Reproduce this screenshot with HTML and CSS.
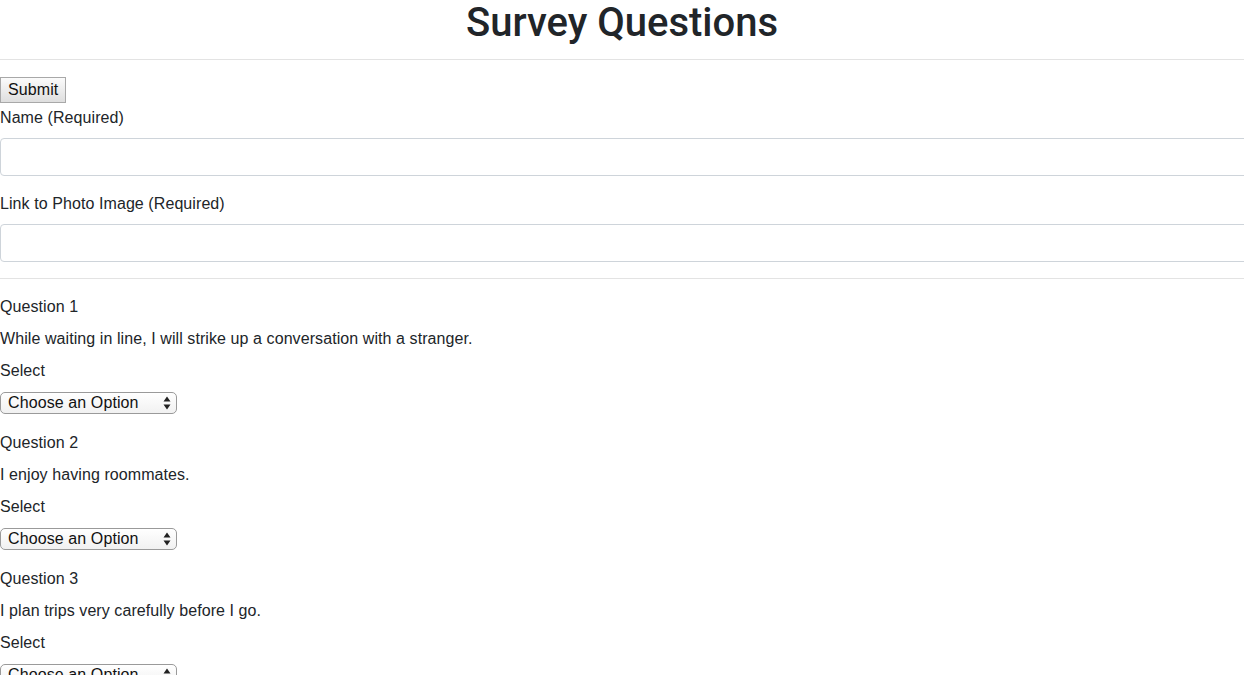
FILE: index.html
```html
<!DOCTYPE html>
<html>
<head>
<meta charset="utf-8">
<link rel="stylesheet" href="styles.css">
</head>
<body>
<div class="page">
  <h1 class="title">Survey Questions</h1>
  <hr class="rule rule-top">
  <form class="survey">
    <button type="button" class="submit">Submit</button>
    <div class="field">
      <label class="label">Name (Required)</label>
      <input class="text-input" type="text">
    </div>
    <div class="field">
      <label class="label">Link to Photo Image (Required)</label>
      <input class="text-input" type="text">
    </div>
    <hr class="rule rule-mid">
    <div class="question">
      <p class="line">Question 1</p>
      <p class="line">While waiting in line, I will strike up a conversation with a stranger.</p>
      <p class="line">Select</p>
      <select class="choice"><option>Choose an Option</option></select>
    </div>
    <div class="question">
      <p class="line">Question 2</p>
      <p class="line">I enjoy having roommates.</p>
      <p class="line">Select</p>
      <select class="choice"><option>Choose an Option</option></select>
    </div>
    <div class="question">
      <p class="line">Question 3</p>
      <p class="line">I plan trips very carefully before I go.</p>
      <p class="line">Select</p>
      <select class="choice"><option>Choose an Option</option></select>
    </div>
  </form>
</div>
</body>
</html>
```
FILE: styles.css
```css
html, body {
  margin: 0;
  padding: 0;
  overflow-x: hidden;
  background: #fff;
}
body {
  font-family: "Liberation Sans", Arial, sans-serif;
  font-size: 16px;
  line-height: 24px;
  letter-spacing: 0.08px;
  color: #212529;
}
.page {
  width: 100%;
  overflow-x: hidden;
}
.title {
  margin: 0;
  padding: 0 0 3px;
  font-family: Roboto, "Liberation Sans", sans-serif;
  font-size: 40px;
  line-height: 45px;
  font-weight: 500;
  letter-spacing: 0;
  text-align: center;
}
.rule {
  border: 0;
  border-top: 1px solid #e3e3e3;
  height: 0;
  margin: 0;
}
.rule-top {
  margin-top: 11px;
  margin-bottom: 17px;
}
.rule-mid {
  margin-bottom: 16px;
}
.survey {
  margin: 0;
}
.submit {
  display: block;
  height: 26px;
  padding: 0 7px;
  margin: 0;
  font-family: inherit;
  font-size: 16px;
  letter-spacing: 0.1px;
  color: #111;
  background: linear-gradient(#fbfbfb, #dedede);
  border: 1px solid #a8a8a8;
  border-radius: 0;
}
.field {
  margin-bottom: 16px;
}
.field:first-of-type {
  margin-top: 3px;
}
.label {
  display: block;
  margin-bottom: 8px;
}
.text-input {
  display: block;
  box-sizing: border-box;
  width: calc(100% + 12px);
  height: 38px;
  margin: 0;
  border: 1px solid #ced4da;
  border-radius: 4px;
  background: #fff;
}
.question {
  margin-bottom: 17px;
}
.line {
  margin: 0 0 8px;
}
.line:nth-of-type(3) {
  margin-bottom: 9px;
}
.choice {
  display: block;
  box-sizing: border-box;
  width: 177px;
  height: 22px;
  margin: 0;
  padding: 0 0 0 7px;
  font-family: inherit;
  font-size: 16px;
  line-height: 20px;
  letter-spacing: 0.1px;
  color: #111;
  border: 1px solid #9a9a9a;
  border-radius: 5px;
  -webkit-appearance: none;
  appearance: none;
  background-color: #fff;
  background-image: url("data:image/svg+xml;utf8,<svg xmlns='http://www.w3.org/2000/svg' width='10' height='16' viewBox='0 0 10 16'><path d='M5 1.5 L8.5 6.5 H1.5 Z M5 14.5 L8.5 9.5 H1.5 Z' fill='%23222'/></svg>"), linear-gradient(#ffffff, #f1f1f1);
  background-repeat: no-repeat, no-repeat;
  background-position: right 4px center, 0 0;
  background-size: 10px 16px, 100% 100%;
}
```
